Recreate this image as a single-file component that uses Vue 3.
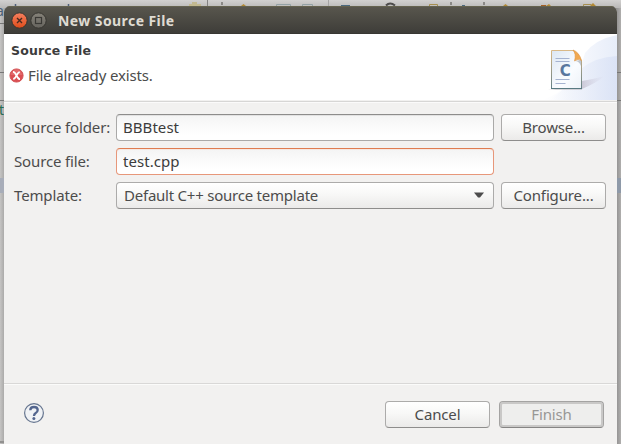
<script setup>
import { ref } from 'vue'

const folder = ref('BBBtest')
const file = ref('test.cpp')
</script>

<template>
  <div class="desktop">
    <svg class="backdrop" width="621" height="444" viewBox="0 0 621 444">
      <defs>
        <linearGradient id="topShade" x1="0" y1="0" x2="0" y2="1">
          <stop offset="0" stop-color="#d2d1d0" />
          <stop offset="1" stop-color="#b3b2b1" />
        </linearGradient>
        <linearGradient id="leftShade" x1="0" y1="0" x2="1" y2="0">
          <stop offset="0" stop-color="#c6c5c4" />
          <stop offset="1" stop-color="#a5a4a3" />
        </linearGradient>
        <linearGradient id="rightShade" x1="0" y1="0" x2="1" y2="0">
          <stop offset="0" stop-color="#8f8e8e" />
          <stop offset="1" stop-color="#b0afae" />
        </linearGradient>
      </defs>
      <rect width="621" height="10" fill="url(#topShade)" />
      <rect y="8" width="5" height="436" fill="url(#leftShade)" />
      <rect x="616" y="8" width="5" height="436" fill="url(#rightShade)" />
      <path d="M0 23.500h4M0 72.500h4M0 100.500h4M617 72.500h4M617 100.500h4" stroke="#777" />
      <rect y="178" width="4" height="15" fill="#a8adb9" />
      <rect x="617" y="178" width="4" height="15" fill="#8e99a8" />
      <path d="M0 442h4" stroke="#929190" stroke-width="2" />
      <path d="M207.500 0v6" stroke="#858483" />
      <path d="M328.500 0v6" stroke="#a6a5a4" />
      <path d="M15.500 4v2M68.500 4v2" stroke="#506079" stroke-width="1.500" />
      <path d="M189 6v-2h3v-2h5v2h4v2" fill="#c2b990" />
      <path d="M222 2v3M451 2v3M484 2v3" stroke="#777571" stroke-width="1.500" />
      <path d="M241 6l2.500-2 2.500 2M503 6l2.500-2 2.500 2M546 6l3-2 2 2M590 6l3-3 3 3" fill="#b38a35" />
      <path d="M276.500 6V4.500h14V6M302.500 6V4.500h10V6" fill="none" stroke="#94a2a5" />
      <path d="M341 5.500h9M462 5.500h3" stroke="#4c6a80" />
      <path d="M386 5.500q4-4 9 0" fill="none" stroke="#4e4d4c" stroke-width="2" />
      <path d="M429.500 6V4.500h8V6M583.500 6V4.500h8" fill="none" stroke="#a68f4f" />
      <path d="M541 5.500h5" stroke="#a55f25" />
      <text class="code" x="-4" y="15.500" fill="#4b5f77">a</text>
      <text class="code" x="-1" y="115" fill="#266b50">t</text>
    </svg>

    <main class="dialog">
      <header class="titlebar">
        <svg width="44" height="20" viewBox="0 0 44 20">
          <defs>
            <linearGradient id="closeFill" x1="0" y1="0" x2="0" y2="1">
              <stop offset="0" stop-color="#f58060" />
              <stop offset="1" stop-color="#df4c19" />
            </linearGradient>
            <linearGradient id="maxFill" x1="0" y1="0" x2="0" y2="1">
              <stop offset="0" stop-color="#858279" />
              <stop offset="1" stop-color="#66645e" />
            </linearGradient>
          </defs>
          <circle cx="11.500" cy="10.500" r="7.700" fill="url(#closeFill)" stroke="#363530" />
          <path d="M9 8l5 5M14 8l-5 5" stroke="#482a20" stroke-width="1.400" />
          <circle cx="30.500" cy="10.500" r="7.700" fill="url(#maxFill)" stroke="#363530" />
          <rect x="27.500" y="7.500" width="6" height="6" fill="none" stroke="#3a3935" stroke-width="1.200" />
        </svg>
        <h1>New Source File</h1>
      </header>

      <section class="banner">
        <div class="messages">
          <h2>Source File</h2>
          <p class="error">
            <svg width="15" height="15" viewBox="0 0 15 15">
              <circle cx="7.500" cy="7.500" r="6.600" fill="#db4f53" stroke="#d4575a" />
              <path d="M2 7a5.500 5.500 0 0 1 11 0z" fill="#e77b7b" opacity=".6" />
              <path d="M4 3.800q1.700 0 3.500 3.700T11 11.200M10.700 3.800Q8.900 4.400 7.500 7.500T4.300 11.200" fill="none" stroke="#fff" stroke-width="1.800" />
            </svg>
            <span>File already exists.</span>
          </p>
        </div>
        <svg class="art" width="75" height="66" viewBox="0 0 75 66">
          <defs>
            <linearGradient id="waveA" x1="0" y1="0" x2="1" y2="0">
              <stop offset="0" stop-color="#fff" />
              <stop offset=".5" stop-color="#f6f8fd" />
              <stop offset="1" stop-color="#e7edf9" />
            </linearGradient>
            <linearGradient id="waveB" x1="0" y1="0" x2="1" y2="0">
              <stop offset="0" stop-color="#e4eaf8" stop-opacity="0" />
              <stop offset=".5" stop-color="#e4eaf8" stop-opacity=".55" />
              <stop offset="1" stop-color="#dbe3f6" />
            </linearGradient>
            <linearGradient id="paper" x1="0" y1="0" x2="1" y2="1">
              <stop offset="0" stop-color="#dce7f4" />
              <stop offset=".6" stop-color="#fafcff" />
              <stop offset="1" stop-color="#edf2f8" />
            </linearGradient>
            <linearGradient id="edge" x1="0" y1="0" x2="0" y2="1">
              <stop offset="0" stop-color="#d9b988" />
              <stop offset="1" stop-color="#638087" />
            </linearGradient>
            <linearGradient id="shadow" x1="0" y1="0" x2="1" y2="0">
              <stop offset="0" stop-color="#aaa1b4" stop-opacity=".5" />
              <stop offset="1" stop-color="#c9c5da" stop-opacity="0" />
            </linearGradient>
          </defs>
          <path d="M0 66Q34 55 43 19Q54 5 75 1V66z" fill="url(#waveA)" />
          <path d="M8 66Q30 50 39 35Q53 23 75 22V66z" fill="url(#waveB)" />
          <path d="M40 55V47Q52 45 63 42Q54 49 40 55z" fill="url(#shadow)" />
          <path d="M6 56q17-3 34-1v1z" fill="#b8b6bd" opacity=".55" />
          <path d="M9.500 16.500h22l8 10v28h-30z" fill="url(#paper)" stroke="url(#edge)" />
          <path d="M9 54.500h31" stroke="#587981" />
          <path d="M33 27q4 0 6 5v-6z" fill="#8e9aa9" opacity=".55" />
          <path d="M31 16Q37 18 39.500 26.500Q36 24 32.500 27Q34.500 20 31 16z" fill="#f1a850" stroke="#db9240" stroke-width=".6" />
          <path d="M13.500 24.500h14M13.500 27.500h14M13.500 45.500h14M13.500 49.500h10" stroke="#a5b3d1" />
          <text x="17.700" y="42" class="letter">C</text>
        </svg>
      </section>

      <form class="fields" @submit.prevent>
        <label for="folder">Source folder:</label>
        <input id="folder" v-model="folder" class="entry" />
        <button type="button">Browse...</button>

        <label for="file">Source file:</label>
        <input id="file" v-model="file" class="entry invalid" />
        <span></span>

        <span class="label">Template:</span>
        <button type="button" class="combo">
          <span>Default C++ source template</span>
          <svg width="10" height="6" viewBox="0 0 10 6"><path d="M0 .5h10L6 5.500H4z" fill="#4c4c4c" /></svg>
        </button>
        <button type="button">Configure...</button>
      </form>

      <footer class="actions">
        <svg width="22" height="22" viewBox="0 0 22 22">
          <circle cx="11" cy="11" r="9.400" fill="#f0f2f5" stroke="#66758f" stroke-width="1.200" />
          <path d="M7.300 8.200Q7.300 5 11 5T14.700 8.100Q14.700 10 12.500 11.200Q11 12.200 11 14" fill="none" stroke="#53658e" stroke-width="2.300" />
          <circle cx="10.900" cy="16.600" r="1.500" fill="#53658e" />
        </svg>
        <div class="buttons">
          <button type="button">Cancel</button>
          <button type="button" class="finish" disabled>Finish</button>
        </div>
      </footer>
    </main>
  </div>
</template>

<style>
body {
  background: #aaa9a8;
}
</style>

<style scoped>
* {
  box-sizing: border-box;
}
.desktop {
  position: relative;
  width: 621px;
  height: 444px;
  padding: 6px 4px 0;
  overflow: hidden;
  font: 15px/20px "Noto Sans", "Open Sans", sans-serif;
  letter-spacing: -0.14px;
  color: #4c4c4c;
}
.backdrop {
  position: absolute;
  inset: 0;
}
.code {
  font: 14px "Noto Sans", sans-serif;
}
.dialog {
  position: relative;
  display: flex;
  flex-direction: column;
  width: 613px;
  height: 438px;
  background: #f2f1f0;
  border-radius: 6px 6px 0 0;
  overflow: hidden;
}
.titlebar {
  display: flex;
  align-items: center;
  gap: 6px;
  height: 28px;
  flex: none;
  padding-left: 4px;
  background: linear-gradient(#59574e, #3d3c38);
  box-shadow: inset 0 1px #65634f, inset 0 -1px #383733;
}
h1 {
  margin: 0;
  padding-top: 1px;
  font-size: 14px;
  line-height: 20px;
  font-weight: 700;
  letter-spacing: 0.42px;
  color: #dfdbd2;
  white-space: nowrap;
}
.banner {
  display: flex;
  justify-content: space-between;
  height: 66px;
  flex: none;
  background: #fff;
}
.messages {
  padding: 9px 0 0 6px;
}
h2 {
  margin: 0 0 0 1px;
  font: bold 12.5px/16px "DejaVu Sans", sans-serif;
  letter-spacing: 0.15px;
  color: #3c3c3c;
}
.error {
  display: flex;
  align-items: center;
  gap: 4px;
  height: 20px;
  margin: 6px 0 0;
}
.error svg {
  flex: none;
  margin-left: -1px;
}
.art {
  display: block;
}
.letter {
  font: bold 15px "DejaVu Sans", sans-serif;
  fill: #59779e;
}
.fields {
  display: grid;
  grid-template-columns: 102px 378px 105px;
  grid-auto-rows: 27px;
  row-gap: 7px;
  margin-top: 1px;
  padding: 12px 11px 0 10px;
  flex: 1;
  border-top: 1px solid #d7d6d5;
  box-shadow: inset 0 1px #fbfafa;
}
.fields > :nth-child(3n) {
  margin-left: 7px;
  width: 105px;
}
label,
.label {
  line-height: 27px;
  white-space: nowrap;
}
.entry {
  width: 378px;
  height: 27px;
  border: 1px solid #aaa9a8;
  border-top-color: #8d8c8b;
  border-radius: 4px;
  padding: 0 6px 2px;
  background: linear-gradient(#f4f4f4, #fff 80%);
  box-shadow: inset 0 1px #e2e2e2;
  font: inherit;
  letter-spacing: 0.05px;
  color: #3c3c3c;
  outline: none;
}
.entry.invalid {
  border-color: #e7977a;
  border-top-color: #df7c51;
  box-shadow: inset 0 1px #f6e8e2;
}
button {
  width: 105px;
  height: 27px;
  display: flex;
  align-items: center;
  justify-content: center;
  padding: 0 0 2px;
  border: 1px solid #acabaa;
  border-bottom-color: #8e8d8c;
  border-radius: 4px;
  background: linear-gradient(#fff, #f8f8f7 45%, #ebeae9);
  font: inherit;
  letter-spacing: inherit;
  color: #4c4c4c;
  white-space: nowrap;
}
.combo {
  width: 378px;
  justify-content: space-between;
  padding: 0 9px 2px 7px;
  letter-spacing: -0.23px;
}
.combo svg {
  margin-top: 1px;
}
.actions {
  display: flex;
  justify-content: space-between;
  align-items: flex-start;
  height: 61px;
  flex: none;
  padding: 17px 13px 0 19px;
  border-top: 1px solid #d9d8d7;
  box-shadow: inset 0 1px #fbfbfa;
}
.actions > svg {
  margin-top: 1px;
}
.buttons {
  display: flex;
  gap: 9px;
}
.finish {
  color: #989795;
  background: #eeeeed;
  border-color: #a4a3a2;
  border-bottom-color: #858483;
  box-shadow: inset 0 0 0 2px #c9c8c7;
}
</style>
